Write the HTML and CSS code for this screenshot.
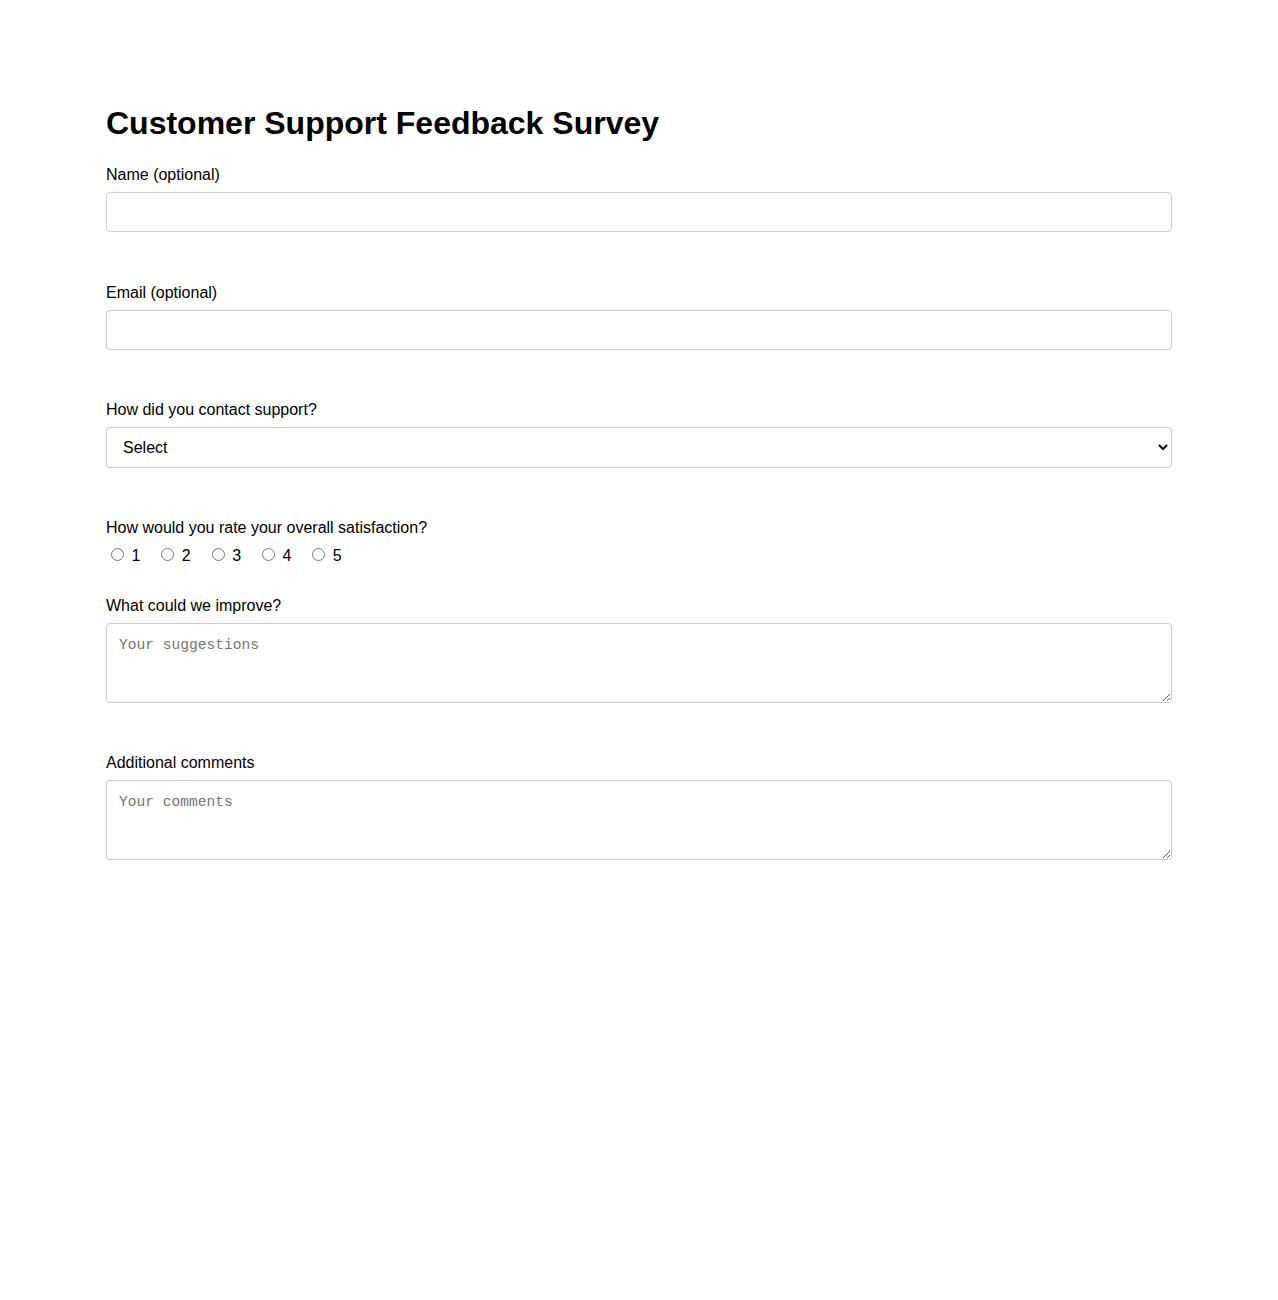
FILE: index.html
```html
<!DOCTYPE html>
<html lang="en">
<head>
<meta charset="utf-8">
<title>Customer Support Feedback Survey</title>
<link rel="stylesheet" href="styles.css">
</head>
<body>
<main class="container">
  <h1 class="title">Customer Support Feedback Survey</h1>
  <form class="survey">
    <div class="field">
      <label class="field-label" for="name">Name (optional)</label>
      <input class="control" type="text" id="name">
    </div>
    <div class="field">
      <label class="field-label" for="email">Email (optional)</label>
      <input class="control" type="email" id="email">
    </div>
    <div class="field field-select">
      <label class="field-label" for="contact">How did you contact support?</label>
      <select class="control select" id="contact">
        <option>Select</option>
        <option>Email</option>
        <option>Phone</option>
        <option>Live chat</option>
      </select>
    </div>
    <div class="field field-radio">
      <span class="field-label">How would you rate your overall satisfaction?</span>
      <div class="radios">
        <label class="radio"><input type="radio" name="rating" value="1"> 1</label>
        <label class="radio"><input type="radio" name="rating" value="2"> 2</label>
        <label class="radio"><input type="radio" name="rating" value="3"> 3</label>
        <label class="radio"><input type="radio" name="rating" value="4"> 4</label>
        <label class="radio"><input type="radio" name="rating" value="5"> 5</label>
      </div>
    </div>
    <div class="field">
      <label class="field-label" for="improve">What could we improve?</label>
      <textarea class="control textarea" id="improve" placeholder="Your suggestions"></textarea>
    </div>
    <div class="field">
      <label class="field-label" for="comments">Additional comments</label>
      <textarea class="control textarea" id="comments" placeholder="Your comments"></textarea>
    </div>
  </form>
</main>
</body>
</html>
```

FILE: styles.css
```css
html, body {
  margin: 0;
  padding: 0;
  background: #ffffff;
}

body {
  font-family: "Liberation Sans", Arial, sans-serif;
  font-size: 16px;
  color: #000000;
}

.container {
  max-width: 1066px;
  margin: 0 auto;
  padding-top: 105px;
}

.title {
  margin: 0 0 24px;
  font-size: 32px;
  font-weight: bold;
  line-height: normal;
}

.survey {
  display: flex;
  flex-direction: column;
}

.field {
  margin-bottom: 51.5px;
}

.field-select {
  margin-bottom: 50.5px;
}

.field-radio {
  margin-bottom: 32px;
}

.field-label {
  display: block;
  margin-bottom: 8px;
  line-height: normal;
}

.control {
  display: block;
  box-sizing: border-box;
  width: 100%;
  height: 40px;
  padding: 10px 12px;
  border: 1px solid #cccccc;
  border-radius: 4px;
  font-family: "Liberation Sans", Arial, sans-serif;
  font-size: 16px;
  background: #ffffff;
  color: #000000;
  margin: 0;
}

.select {
  height: 41px;
  padding: 10px 12px;
}

.textarea {
  height: 80px;
  font-family: "Liberation Mono", "DejaVu Sans Mono", monospace;
  font-size: 14.6px;
  padding: 13px 12px 11px;
  resize: vertical;
}

.textarea::placeholder {
  color: #757575;
}

.radios {
  display: flex;
  align-items: center;
}

.radio {
  margin-right: 16px;
  line-height: normal;
}
```
